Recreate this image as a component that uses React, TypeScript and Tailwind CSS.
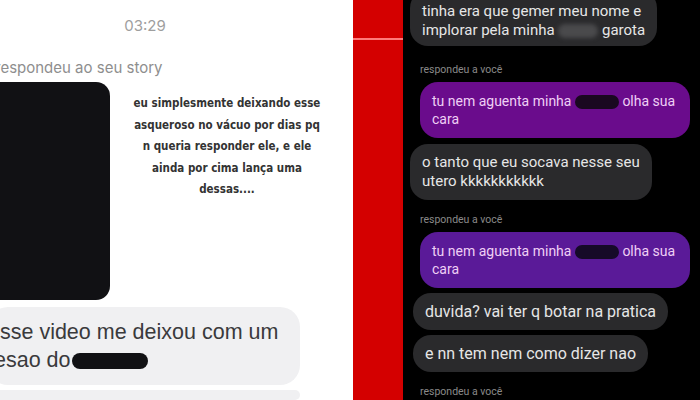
import React from 'react';

const storyLines = [
  'eu simplesmente deixando esse',
  'asqueroso no vácuo por dias pq',
  'n queria responder ele, e ele',
  'ainda por cima lança uma',
  'dessas....',
];

function Pill({ className }: { className: string }) {
  return <span className={`inline-block align-middle rounded-full ${className}`} />;
}

function DarkBubble({ children, className = '' }: { children: React.ReactNode; className?: string }) {
  return (
    <div className={`self-start w-fit whitespace-nowrap rounded-[18px] bg-[#2a2a2c] px-[12px] text-[15px] leading-[19px] text-[#e6e6e6] ${className}`}>
      {children}
    </div>
  );
}

function PurpleBubble({ color, children }: { color: string; children: React.ReactNode }) {
  return (
    <div className={`ml-[10px] w-[270px] rounded-[18px] px-[12px] py-[10px] text-[14px] leading-[18px] text-[#efcff5] ${color}`}>
      {children}
    </div>
  );
}

function Replied({ className = '' }: { className?: string }) {
  return <div className={`ml-[10px] text-[10.5px] leading-[14px] text-[#8a8a8a] ${className}`}>respondeu a você</div>;
}

export default function App() {
  return (
    <div className="flex h-[400px] w-[700px] overflow-hidden" style={{ fontFamily: 'Roboto, "Liberation Sans", sans-serif' }}>
      {/* left screenshot */}
      <div className="flex w-[353px] shrink-0 flex-col overflow-hidden bg-white">
        <div className="mt-[16px] w-[290px] text-center text-[15px] leading-[20px] text-[#9e9e9e]" style={{ fontFamily: 'Inter, sans-serif' }}>
          03:29
        </div>
        <div className="mt-[22px] ml-[-5px] text-[15px] leading-[20px] text-[#8e8e8e]" style={{ fontFamily: 'Inter, sans-serif' }}>
          respondeu ao seu story
        </div>
        <div className="mt-[4px] flex">
          <div className="h-[218px] w-[110px] shrink-0 rounded-r-[14px] bg-[#111114]" />
          <div
            className="mt-[11px] ml-[18px] w-[198px] whitespace-nowrap text-center text-[11.5px] font-bold leading-[21.5px] text-[#333333]"
            style={{ fontFamily: '"DejaVu Sans Condensed", "DejaVu Sans", sans-serif' }}
          >
            {storyLines.map((l) => (
              <div key={l}>{l}</div>
            ))}
          </div>
        </div>
        <div
          className="mt-[7px] ml-[-12px] w-[312px] whitespace-nowrap rounded-[20px] bg-[#f0f0f2] py-[11px] text-[21.5px] leading-[28px] text-[#3a3a3c]"
          style={{ fontFamily: '"Liberation Sans", Arial, sans-serif' }}
        >
          <div>esse video me deixou com um</div>
          <div>
            tesao do<Pill className="ml-[2px] h-[16px] w-[76px] bg-[#111114]" />
          </div>
        </div>
        <div className="mt-[5px] ml-[-12px] h-[40px] w-[312px] rounded-[20px] bg-[#f0f0f2]" />
      </div>

      {/* red strip */}
      <div className="flex w-[50px] shrink-0 flex-col bg-[#d40000]">
        <div className="h-[38px]" />
        <div className="h-[2px] bg-[#ff7a7a]" />
      </div>

      {/* right screenshot */}
      <div className="flex flex-1 flex-col bg-black pl-[7px]">
        <DarkBubble className="mt-[-10px] pt-[12px] pb-[6px] text-[15.3px]">
          <div>tinha era que gemer meu nome e</div>
          <div>
            implorar pela minha <Pill className="h-[14px] w-[40px] bg-[#4a4a4c] blur-[2px]" /> garota
          </div>
        </DarkBubble>
        <Replied className="mt-[17px]" />
        <div className="mt-[5px]">
          <PurpleBubble color="bg-[#6a0c8c]">
            tu nem aguenta minha <Pill className="h-[14px] w-[44px] bg-[#1a0820]" /> olha sua cara
          </PurpleBubble>
        </div>
        <DarkBubble className="mt-[6px] py-[9px]">
          <div>o tanto que eu socava nesse seu</div>
          <div>utero kkkkkkkkkkk</div>
        </DarkBubble>
        <Replied className="mt-[13px]" />
        <div className="mt-[5px]">
          <PurpleBubble color="bg-[#5a1a98]">
            tu nem aguenta minha <Pill className="h-[14px] w-[44px] bg-[#160a28]" /> olha sua cara
          </PurpleBubble>
        </div>
        <DarkBubble className="mt-[5px] ml-[3px] py-[9px] text-[16px]">duvida? vai ter q botar na pratica</DarkBubble>
        <DarkBubble className="mt-[5px] ml-[3px] py-[9px] text-[16px]">e nn tem nem como dizer nao</DarkBubble>
        <Replied className="mt-[13px]" />
      </div>
    </div>
  );
}
